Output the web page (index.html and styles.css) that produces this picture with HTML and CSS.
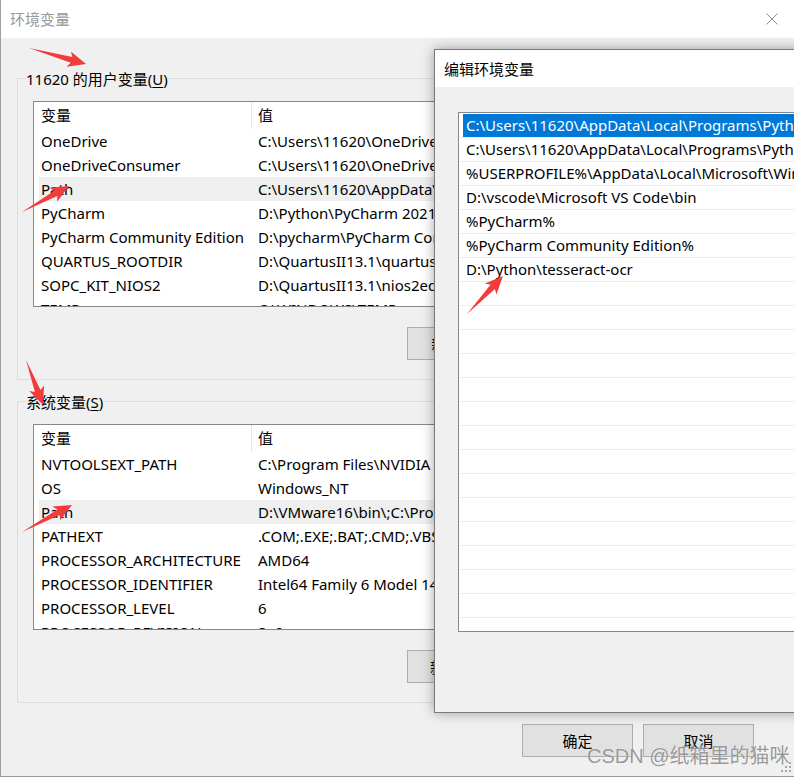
FILE: index.html
```html
<!DOCTYPE html>
<html lang="zh-CN">
<head>
    <meta charset="UTF-8">
    <meta name="viewport" content="width=device-width, initial-scale=1.0">
    <title>环境变量</title>
    <link rel="stylesheet" href="styles.css">
</head>
<body>
    <div class="main-window">
        <div class="titlebar">
            <span class="title inactive">环境变量</span>
            <span class="close">
                <svg width="12" height="12" viewBox="0 0 12 12"><path d="M0.5 0.5L11.5 11.5M11.5 0.5L0.5 11.5" stroke="#8c8c8c" stroke-width="1" fill="none"/></svg>
            </span>
        </div>
        <div class="content">
            <div class="group">
                <div class="group-title">11620 的用户变量(<u>U</u>)</div>
                <div class="list">
                    <div class="list-head">
                        <span class="head-name">变量</span>
                        <span class="head-value">值</span>
                    </div>
                    <div class="var-row"><span class="var-name">OneDrive</span><span class="var-value">C:\Users\11620\OneDrive</span></div>
                    <div class="var-row"><span class="var-name">OneDriveConsumer</span><span class="var-value">C:\Users\11620\OneDrive</span></div>
                    <div class="var-row hover"><span class="var-name">Path</span><span class="var-value">C:\Users\11620\AppData\Local\Programs\Python\Python39\Scripts\</span></div>
                    <div class="var-row"><span class="var-name">PyCharm</span><span class="var-value">D:\Python\PyCharm 2021.2.3\bin;</span></div>
                    <div class="var-row"><span class="var-name">PyCharm Community Edition</span><span class="var-value">D:\pycharm\PyCharm Community Edition 2021.2.3\bin;</span></div>
                    <div class="var-row"><span class="var-name">QUARTUS_ROOTDIR</span><span class="var-value">D:\QuartusII13.1\quartus</span></div>
                    <div class="var-row"><span class="var-name">SOPC_KIT_NIOS2</span><span class="var-value">D:\QuartusII13.1\nios2eds</span></div>
                    <div class="var-row"><span class="var-name">TEMP</span><span class="var-value">C:\WINDOWS\TEMP</span></div>
                </div>
                <div class="group-actions">
                    <button class="btn">新建(<u>N</u>)...</button>
                    <button class="btn">编辑(<u>E</u>)...</button>
                    <button class="btn">删除(<u>D</u>)</button>
                </div>
            </div>

            <div class="group">
                <div class="group-title">系统变量(<u>S</u>)</div>
                <div class="list">
                    <div class="list-head">
                        <span class="head-name">变量</span>
                        <span class="head-value">值</span>
                    </div>
                    <div class="var-row"><span class="var-name">NVTOOLSEXT_PATH</span><span class="var-value">C:\Program Files\NVIDIA Corporation\NvToolsExt\</span></div>
                    <div class="var-row"><span class="var-name">OS</span><span class="var-value">Windows_NT</span></div>
                    <div class="var-row hover"><span class="var-name">Path</span><span class="var-value">D:\VMware16\bin\;C:\Program Files\Common Files\Oracle\Java\</span></div>
                    <div class="var-row"><span class="var-name">PATHEXT</span><span class="var-value">.COM;.EXE;.BAT;.CMD;.VBS;.VBE;.JS;.JSE;.WSF;.WSH;.MSC</span></div>
                    <div class="var-row"><span class="var-name">PROCESSOR_ARCHITECTURE</span><span class="var-value">AMD64</span></div>
                    <div class="var-row"><span class="var-name">PROCESSOR_IDENTIFIER</span><span class="var-value">Intel64 Family 6 Model 142 Stepping 10, GenuineIntel</span></div>
                    <div class="var-row"><span class="var-name">PROCESSOR_LEVEL</span><span class="var-value">6</span></div>
                    <div class="var-row"><span class="var-name">PROCESSOR_REVISION</span><span class="var-value">8e0a</span></div>
                </div>
                <div class="group-actions">
                    <button class="btn">新建(<u>W</u>)...</button>
                    <button class="btn">编辑(<u>I</u>)...</button>
                    <button class="btn">删除(<u>L</u>)</button>
                </div>
            </div>

            <div class="window-actions">
                <button class="btn">确定</button>
                <button class="btn">取消</button>
            </div>
        </div>
        <svg class="grip" width="12" height="12" viewBox="0 0 12 12">
            <rect x="9" y="1" width="2" height="2" fill="#a8a8a8"/>
            <rect x="5" y="5" width="2" height="2" fill="#a8a8a8"/>
            <rect x="9" y="5" width="2" height="2" fill="#a8a8a8"/>
            <rect x="1" y="9" width="2" height="2" fill="#a8a8a8"/>
            <rect x="5" y="9" width="2" height="2" fill="#a8a8a8"/>
            <rect x="9" y="9" width="2" height="2" fill="#a8a8a8"/>
        </svg>
    </div>

    <div class="edit-dialog">
        <div class="dialog-titlebar">编辑环境变量</div>
        <div class="dialog-body">
            <div class="path-list">
                <div class="path-row selected"><span class="path-text">C:\Users\11620\AppData\Local\Programs\Python\Python39\Scripts\</span></div>
                <div class="path-row"><span class="path-text">C:\Users\11620\AppData\Local\Programs\Python\Python39\</span></div>
                <div class="path-row"><span class="path-text">%USERPROFILE%\AppData\Local\Microsoft\WindowsApps</span></div>
                <div class="path-row"><span class="path-text">D:\vscode\Microsoft VS Code\bin</span></div>
                <div class="path-row"><span class="path-text">%PyCharm%</span></div>
                <div class="path-row"><span class="path-text">%PyCharm Community Edition%</span></div>
                <div class="path-row"><span class="path-text">D:\Python\tesseract-ocr</span></div>
                <div class="path-row"><span class="path-text"></span></div>
                <div class="path-row"><span class="path-text"></span></div>
                <div class="path-row"><span class="path-text"></span></div>
                <div class="path-row"><span class="path-text"></span></div>
                <div class="path-row"><span class="path-text"></span></div>
                <div class="path-row"><span class="path-text"></span></div>
                <div class="path-row"><span class="path-text"></span></div>
                <div class="path-row"><span class="path-text"></span></div>
                <div class="path-row"><span class="path-text"></span></div>
                <div class="path-row"><span class="path-text"></span></div>
                <div class="path-row"><span class="path-text"></span></div>
                <div class="path-row"><span class="path-text"></span></div>
                <div class="path-row"><span class="path-text"></span></div>
                <div class="path-row"><span class="path-text"></span></div>
                <div class="path-row"><span class="path-text"></span></div>
            </div>
        </div>
    </div>

    <!-- red arrows drawn on top of the screenshot -->
    <svg class="annotations" width="794" height="777" viewBox="0 0 794 777">
        <polygon points="29,48 72.4,57 70.9,51.4 86,64 66.5,66.8 70.8,62.8"/>
        <polygon points="22,212 54.4,190.7 49.4,187.7 69,186 57.1,201.7 57.3,195.9"/>
        <polygon points="26,360 40.5,389.9 44.1,385.4 43,405 29.2,391 34.9,392.1"/>
        <polygon points="22,532 57.4,509.5 52.4,506.6 72,505 60,520.6 60.2,514.8"/>
        <polygon points="467,314 490.5,284.8 484.8,283.6 503,276 496.4,294.6 494.9,289"/>
    </svg>

    <div class="watermark">CSDN @纸箱里的猫咪</div>
</body>
</html>
```

FILE: styles.css
```css
* {
    box-sizing: border-box;
}

body {
    margin: 0;
    width: 794px;
    height: 777px;
    overflow: hidden;
    position: relative;
    background: #ffffff;
    font-family: "Noto Sans", "Noto Sans CJK SC", sans-serif;
    font-size: 15px;
    color: #000;
}

u {
    text-decoration-thickness: 1px;
    text-underline-offset: 2px;
}

/* main window */
.main-window {
    position: relative;
    width: 794px;
    height: 777px;
    border-left: 1px solid #a0a0a0;
    border-bottom: 1px solid #9a9a9a;
    background-color: #f0f0f0;
}

.titlebar {
    height: 38px;
    background-color: #ffffff;
    display: flex;
    align-items: center;
    justify-content: space-between;
}

.title {
    padding-left: 9px;
    line-height: 20px;
}

.title.inactive {
    color: #999999;
}

.close {
    width: 44px;
    height: 38px;
    display: flex;
    align-items: center;
    justify-content: center;
}

.content {
    padding: 40px 16px 0 16px;
}

.group {
    border: 1px solid #dcdcdc;
    padding: 0 17px 19px 15px;
}

.group + .group {
    margin-top: 21px;
}

.group-title {
    width: fit-content;
    margin: -10px 0 0 -7px;
    padding: 0 1px 0 0;
    line-height: 20px;
    background-color: #f0f0f0;
}

.list {
    margin-top: 12px;
    height: 206px;
    border: 1px solid #828790;
    background-color: #ffffff;
    overflow: hidden;
}

.list-head {
    height: 27px;
    display: flex;
    white-space: nowrap;
}

.head-name {
    width: 218px;
    padding-left: 7px;
    line-height: 27px;
    border-right: 1px solid #e5e5e5;
}

.head-value {
    padding-left: 6px;
    line-height: 27px;
}

.var-row {
    height: 24px;
    line-height: 24px;
    margin-left: 5px;
    display: flex;
    white-space: nowrap;
}

.var-row.hover {
    background-color: #efefef;
}

.var-name {
    flex-shrink: 0;
    width: 219px;
    padding-left: 2px;
    overflow: hidden;
}

.group-actions {
    display: flex;
    justify-content: flex-end;
    gap: 10px;
    margin-top: 20px;
}

.btn {
    width: 111px;
    height: 33px;
    padding: 0;
    font-family: inherit;
    font-size: 15px;
    color: #000;
    background-color: #e1e1e1;
    border: 1px solid #adadad;
}

.window-actions {
    display: flex;
    justify-content: flex-end;
    gap: 10px;
    margin-top: 21px;
    padding-right: 24px;
}

.grip {
    position: absolute;
    right: 2px;
    bottom: 3px;
}

/* edit dialog on top */
.edit-dialog {
    position: absolute;
    left: 434px;
    top: 49px;
    width: 420px;
    height: 664px;
    border: 1px solid #7a7a7a;
    background-color: #f0f0f0;
    box-shadow: 0 0 12px rgba(0, 0, 0, 0.35);
}

.dialog-titlebar {
    height: 37px;
    padding-left: 9px;
    display: flex;
    align-items: center;
    background-color: #ffffff;
    white-space: nowrap;
}

.dialog-body {
    padding: 25px 0 0 23px;
}

.path-list {
    height: 520px;
    border: 1px solid #828790;
    background-color: #ffffff;
    padding: 1px 0 0 1px;
    overflow: hidden;
}

.path-row {
    height: 24px;
    padding-left: 3px;
    border-bottom: 1px solid #ececec;
}

.path-text {
    display: block;
    height: 23px;
    line-height: 23px;
    padding-left: 3px;
    white-space: nowrap;
}

.path-row.selected .path-text {
    background-color: #0078d7;
    color: #ffffff;
}

/* annotations */
.annotations {
    position: absolute;
    left: 0;
    top: 0;
    pointer-events: none;
}

.annotations polygon {
    fill: #f23b3b;
}

.watermark {
    position: absolute;
    left: 587px;
    top: 744px;
    font-family: "Liberation Sans", "Noto Sans CJK SC", sans-serif;
    font-size: 20px;
    line-height: 24px;
    color: rgba(125, 125, 125, 0.8);
    text-shadow: 0 0 1px #ffffff;
    white-space: nowrap;
}
```
